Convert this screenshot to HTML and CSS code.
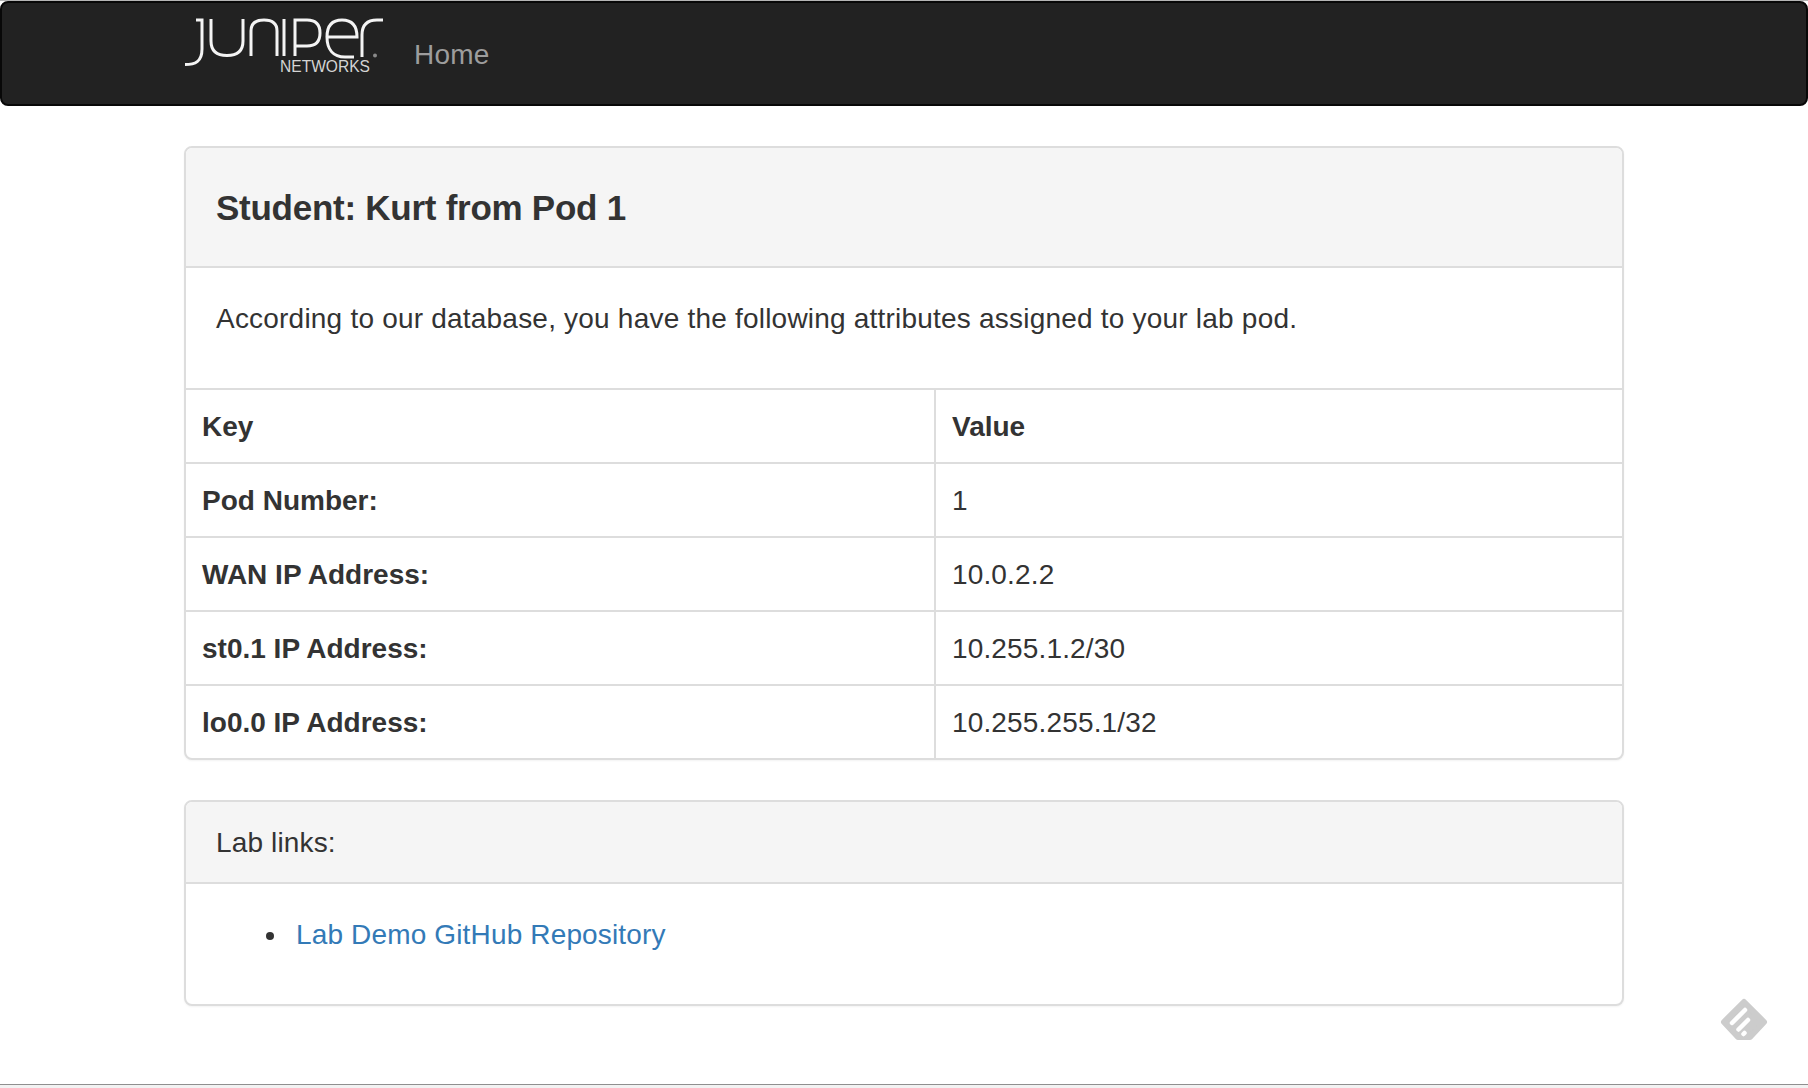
FILE: index.html
```html
<!DOCTYPE html>
<html lang="en">
<head>
<meta charset="utf-8">
<title>Student Pod</title>
<link rel="stylesheet" href="styles.css">
</head>
<body>
<div class="page">
  <nav class="navbar">
    <a class="brand" href="#" aria-label="Juniper Networks">
      <svg class="logo" viewBox="0 0 210 66" width="210" height="66" fill="none" stroke="#f4f4f4" stroke-width="3">
        <path d="M5 52.5 C15 52.5 22 50 22 37 V8 H16"/>
        <path d="M31 7 V29 C31 39 37 43.5 47 43.5 C57 43.5 63 39 63 29 V7"/>
        <path d="M71 44 V19 C71 10 77 8 84 8 C91 8 97 10 97 19 V44"/>
        <path d="M104 7 V44"/>
        <path d="M115 44 V8 H127 C136 8 140 13 140 21 C140 29 136 34 127 34 H115"/>
        <path d="M147 25 H177 C177 13 171 8 162 8 C152 8 147 14 147 25 C147 37 153 45 165 45 H174"/>
        <path d="M182 45 V23 C182 12 188 8 197 8 H203"/>
        <circle cx="195" cy="43.5" r="2" fill="#8a8a8a" stroke="none"/>
        <text class="logo-sub" x="100" y="60" textLength="90" lengthAdjust="spacingAndGlyphs">NETWORKS</text>
      </svg>
    </a>
    <a class="nav-link" href="#">Home</a>
  </nav>

  <main class="container">
    <section class="panel">
      <header class="panel-heading panel-heading-large">
        <h3 class="panel-title">Student: Kurt from Pod 1</h3>
      </header>
      <div class="panel-body panel-body-intro">
        <p class="lead-text">According to our database, you have the following attributes assigned to your lab pod.</p>
      </div>
      <table class="data-table">
        <tbody>
          <tr><th class="col-key">Key</th><th>Value</th></tr>
          <tr><th class="col-key">Pod Number:</th><td>1</td></tr>
          <tr><th class="col-key">WAN IP Address:</th><td>10.0.2.2</td></tr>
          <tr><th class="col-key">st0.1 IP Address:</th><td>10.255.1.2/30</td></tr>
          <tr><th class="col-key">lo0.0 IP Address:</th><td>10.255.255.1/32</td></tr>
        </tbody>
      </table>
    </section>

    <section class="panel">
      <header class="panel-heading panel-heading-small">Lab links:</header>
      <div class="panel-body panel-body-links">
        <ul class="link-list">
          <li class="link-item"><a class="link" href="#">Lab Demo GitHub Repository</a></li>
        </ul>
      </div>
    </section>
  </main>

  <div class="bottom-edge"></div>

  <svg class="feedly" viewBox="0 0 48 44" width="48" height="44" aria-label="Feedly">
    <polygon class="feedly-body" points="24,4 44,24 30,39 18,39 4,24"/>
    <path class="feedly-bars" d="M12 25 L25 12 M18.5 31.5 L28 22 M23.5 36 L24.5 35"/>
  </svg>
</div>
</body>
</html>
```

FILE: styles.css
```css
* {
  box-sizing: border-box;
}

html,
body {
  margin: 0;
  padding: 0;
  background: #fff;
}

body {
  font-family: "Liberation Sans", Arial, sans-serif;
  font-size: 28px;
  line-height: 40px;
  letter-spacing: 0.15px;
  color: #333;
}

.page {
  position: relative;
  display: flex;
  flex-direction: column;
  height: 1088px;
  overflow: hidden;
  border-top: 1px solid #b5b5b5;
}

.navbar {
  display: flex;
  align-items: flex-start;
  flex: none;
  height: 105px;
  padding-left: 178px;
  background: #222;
  border: 2px solid #080808;
  border-radius: 8px;
}

.brand {
  display: block;
  height: 66px;
  margin-top: 9px;
}

.logo {
  display: block;
}

.logo-sub {
  font-family: "Liberation Sans", Arial, sans-serif;
  font-size: 16px;
  letter-spacing: 0;
  fill: #d4d4d4;
  stroke: none;
}

.nav-link {
  margin-left: 24px;
  margin-top: 32px;
  color: #9d9d9d;
  letter-spacing: 0.2px;
  text-decoration: none;
}

.container {
  display: flex;
  flex-direction: column;
  gap: 40px;
  width: 1440px;
  margin: 40px 0 0 184px;
}

.panel {
  border: 2px solid #ddd;
  border-radius: 8px;
  background: #fff;
  box-shadow: 0 1px 2px rgba(0, 0, 0, 0.05);
  overflow: hidden;
}

.panel-heading {
  padding: 20px 30px;
  background: #f5f5f5;
  border-bottom: 2px solid #ddd;
}

.panel-heading-large {
  padding: 40px 30px 38px;
}

.panel-heading-small {
  padding: 21px 30px 19px;
}

.panel-title {
  margin: 0;
  font-size: 35px;
  line-height: 40px;
  letter-spacing: -0.26px;
  font-weight: 700;
}

.panel-body {
  padding: 30px;
}

.panel-body-intro {
  padding-top: 31px;
  padding-bottom: 29px;
}

.panel-body-links {
  padding-top: 31px;
  padding-bottom: 29px;
}

.lead-text {
  margin: 0 0 20px;
  letter-spacing: 0.21px;
}

.data-table {
  width: 100%;
  border-collapse: separate;
  border-spacing: 0;
  table-layout: fixed;
}

.data-table th,
.data-table td {
  height: 74px;
  padding: 17px 16px 15px;
  text-align: left;
  vertical-align: middle;
  border-top: 2px solid #ddd;
}

.data-table th {
  font-weight: 700;
  letter-spacing: 0;
}

.col-key {
  width: 750px;
  border-right: 2px solid #ddd;
}

.link-list {
  margin: 0 0 20px;
  padding-left: 80px;
  list-style: none;
}

.link-item {
  position: relative;
}

.link-item::before {
  content: "";
  position: absolute;
  left: -30px;
  top: 17px;
  width: 8px;
  height: 8px;
  border-radius: 50%;
  background: #333;
}

.link {
  color: #337ab7;
  text-decoration: none;
}

.bottom-edge {
  margin-top: auto;
  flex: none;
  height: 4px;
  background: #f2f2f2;
  border-top: 1px solid #8f8f8f;
}

.feedly {
  position: absolute;
  left: 1720px;
  top: 997px;
}

.feedly-body {
  fill: #ccc;
  stroke: #ccc;
  stroke-width: 6;
  stroke-linejoin: round;
}

.feedly-bars {
  fill: none;
  stroke: #fff;
  stroke-width: 4.5;
  stroke-linecap: round;
}
```
